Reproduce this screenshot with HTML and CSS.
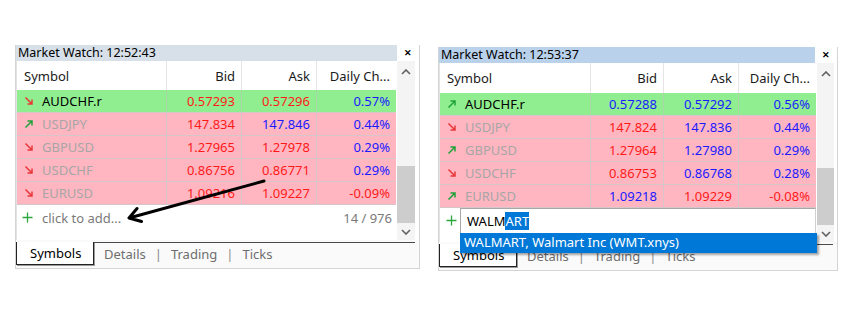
FILE: index.html
```html
<!doctype html>
<html lang="en">
<head>
    <meta charset="utf-8"/>
    <title>Market Watch</title>
    <link rel="stylesheet" href="styles.css">
</head>
<body>

<div class="stage">

    <!-- left window: inactive, "click to add" -->
    <div class="panel panel-a">
        <div class="title">
            <span class="title-text">Market Watch: 12:52:43</span>
            <span class="close">&#x2715;</span>
        </div>
        <div class="main">
            <div class="table">
                <div class="row head">
                    <div class="cell sym">Symbol</div>
                    <div class="cell num">Bid</div>
                    <div class="cell num">Ask</div>
                    <div class="cell num">Daily Ch...</div>
                </div>
                <div class="row green">
                    <div class="cell sym active"><svg class="dir dn" viewBox="0 0 10 10"><path d="M1.5 1.5L8 8M8 3.5V8H3.5"/></svg>AUDCHF.r</div>
                    <div class="cell num red">0.57293</div>
                    <div class="cell num red">0.57296</div>
                    <div class="cell num blue">0.57%</div>
                </div>
                <div class="row pink">
                    <div class="cell sym"><svg class="dir up" viewBox="0 0 10 10"><path d="M1.5 8.5L8 2M3.5 2H8V6.5"/></svg>USDJPY</div>
                    <div class="cell num red">147.834</div>
                    <div class="cell num blue">147.846</div>
                    <div class="cell num blue">0.44%</div>
                </div>
                <div class="row pink">
                    <div class="cell sym"><svg class="dir dn" viewBox="0 0 10 10"><path d="M1.5 1.5L8 8M8 3.5V8H3.5"/></svg>GBPUSD</div>
                    <div class="cell num red">1.27965</div>
                    <div class="cell num red">1.27978</div>
                    <div class="cell num blue">0.29%</div>
                </div>
                <div class="row pink">
                    <div class="cell sym"><svg class="dir dn" viewBox="0 0 10 10"><path d="M1.5 1.5L8 8M8 3.5V8H3.5"/></svg>USDCHF</div>
                    <div class="cell num red">0.86756</div>
                    <div class="cell num red">0.86771</div>
                    <div class="cell num blue">0.29%</div>
                </div>
                <div class="row pink">
                    <div class="cell sym"><svg class="dir dn" viewBox="0 0 10 10"><path d="M1.5 1.5L8 8M8 3.5V8H3.5"/></svg>EURUSD</div>
                    <div class="cell num red">1.09216</div>
                    <div class="cell num red">1.09227</div>
                    <div class="cell num red">-0.09%</div>
                </div>
                <div class="add">
                    <svg class="plus" viewBox="0 0 11 11"><path d="M5.5 0.5V10.5M0.5 5.5H10.5"/></svg>
                    <span class="hint">click to add...</span>
                    <span class="count">14 / 976</span>
                </div>
            </div>
            <div class="scroll">
                <div class="sbtn"><svg viewBox="0 0 10 6"><path d="M1 5L5 1L9 5"/></svg></div>
                <div class="track"><div class="thumb"></div></div>
                <div class="sbtn"><svg viewBox="0 0 10 6"><path d="M1 1L5 5L9 1"/></svg></div>
            </div>
        </div>
        <div class="tabs">
            <div class="tab on">Symbols</div>
            <div class="tab-rest">
                <span class="tab">Details</span><span class="sep">|</span>
                <span class="tab">Trading</span><span class="sep">|</span>
                <span class="tab">Ticks</span>
            </div>
        </div>
    </div>

    <!-- right window: active, typing a symbol -->
    <div class="panel panel-b">
        <div class="title">
            <span class="title-text">Market Watch: 12:53:37</span>
            <span class="close">&#x2715;</span>
        </div>
        <div class="main">
            <div class="table">
                <div class="row head">
                    <div class="cell sym">Symbol</div>
                    <div class="cell num">Bid</div>
                    <div class="cell num">Ask</div>
                    <div class="cell num">Daily Ch...</div>
                </div>
                <div class="row green">
                    <div class="cell sym active"><svg class="dir up" viewBox="0 0 10 10"><path d="M1.5 8.5L8 2M3.5 2H8V6.5"/></svg>AUDCHF.r</div>
                    <div class="cell num blue">0.57288</div>
                    <div class="cell num blue">0.57292</div>
                    <div class="cell num blue">0.56%</div>
                </div>
                <div class="row pink">
                    <div class="cell sym"><svg class="dir dn" viewBox="0 0 10 10"><path d="M1.5 1.5L8 8M8 3.5V8H3.5"/></svg>USDJPY</div>
                    <div class="cell num red">147.824</div>
                    <div class="cell num blue">147.836</div>
                    <div class="cell num blue">0.44%</div>
                </div>
                <div class="row pink">
                    <div class="cell sym"><svg class="dir up" viewBox="0 0 10 10"><path d="M1.5 8.5L8 2M3.5 2H8V6.5"/></svg>GBPUSD</div>
                    <div class="cell num red">1.27964</div>
                    <div class="cell num blue">1.27980</div>
                    <div class="cell num blue">0.29%</div>
                </div>
                <div class="row pink">
                    <div class="cell sym"><svg class="dir dn" viewBox="0 0 10 10"><path d="M1.5 1.5L8 8M8 3.5V8H3.5"/></svg>USDCHF</div>
                    <div class="cell num red">0.86753</div>
                    <div class="cell num blue">0.86768</div>
                    <div class="cell num blue">0.28%</div>
                </div>
                <div class="row pink">
                    <div class="cell sym"><svg class="dir up" viewBox="0 0 10 10"><path d="M1.5 8.5L8 2M3.5 2H8V6.5"/></svg>EURUSD</div>
                    <div class="cell num blue">1.09218</div>
                    <div class="cell num red">1.09229</div>
                    <div class="cell num red">-0.08%</div>
                </div>
                <div class="add editing">
                    <svg class="plus" viewBox="0 0 11 11"><path d="M5.5 0.5V10.5M0.5 5.5H10.5"/></svg>
                    <div class="input">WALM<span class="sel">ART</span>
                        <div class="suggest">WALMART, Walmart Inc (WMT.xnys)</div>
                    </div>
                </div>
            </div>
            <div class="scroll">
                <div class="sbtn"><svg viewBox="0 0 10 6"><path d="M1 5L5 1L9 5"/></svg></div>
                <div class="track"><div class="thumb"></div></div>
                <div class="sbtn"><svg viewBox="0 0 10 6"><path d="M1 1L5 5L9 1"/></svg></div>
            </div>
        </div>
        <div class="tabs">
            <div class="tab on">Symbols</div>
            <div class="tab-rest">
                <span class="tab">Details</span><span class="sep">|</span>
                <span class="tab">Trading</span><span class="sep">|</span>
                <span class="tab">Ticks</span>
            </div>
        </div>
    </div>

    <!-- annotation arrow pointing at "click to add" -->
    <svg class="pointer" viewBox="0 0 851 315" width="851" height="315">
        <path d="M264 181L129 218M137 208.5L129 218L141.5 221.5"/>
    </svg>
</div>

</body>
</html>
```

FILE: styles.css
```css
* {
    padding: 0;
    margin: 0;
    box-sizing: border-box;
}
body {
    background: #fff;
    font-family: "Noto Sans", "Open Sans", sans-serif;
    font-size: 13px;
    color: #000;
}
.stage {
    position: relative;
    width: 851px;
    height: 315px;
    display: flex;
    align-items: flex-start;
    gap: 18px;
    padding: 45px 0 0 15px;
}

/* window */
.panel {
    border: 1px solid #d4d4d4;
    border-top: none;
    background: #fff;
}
.panel-a {
    width: 405px;
}
.panel-b {
    width: 400px;
    margin-top: 2px;
}
.title {
    height: 16px;
    display: flex;
    align-items: center;
    font-size: 12.5px;
    line-height: 16px;
}
.title-text {
    flex: 1;
    height: 16px;
    padding-left: 2px;
    background: #d7e0e9;
    white-space: nowrap;
}
.panel-b .title-text {
    background: #b9d1ea;
}
.close {
    width: 22px;
    text-align: center;
    font-size: 9px;
    font-weight: bold;
}

/* table */
.main {
    display: flex;
    gap: 1px;
    padding-right: 4px;
    height: 179px;
}
.panel-b .main {
    padding-right: 3px;
}
.table {
    display: flex;
    flex-direction: column;
    border-left: 1px solid #e3e3e3;
}
.row {
    display: grid;
    grid-template-columns: 150px 75px 75px 79px;
    height: 23px;
    border-bottom: 1px solid #d6c6ca;
}
.panel-b .row {
    grid-template-columns: 151px 73px 75px 77px;
}
.row.head {
    height: 29px;
    border-bottom: none;
}
.panel-b .row.head {
    height: 30px;
}
.cell {
    display: flex;
    align-items: center;
    padding: 0 6px;
    border-right: 1px solid #d6c6ca;
    white-space: nowrap;
    overflow: hidden;
}
.head .cell {
    border-right-color: #e5e5e5;
    color: #1a1a1a;
}
.cell:last-child {
    border-right: none;
}
.cell.sym {
    padding-left: 7px;
    color: #a6a6a6;
}
.head .cell.sym {
    color: #1a1a1a;
}
.cell.sym.active {
    color: #000;
}
.cell.num {
    justify-content: flex-end;
}
.green {
    background: #90ee90;
}
.green .cell {
    border-right-color: #a8d8a8;
}
.pink {
    background: #ffb6c1;
}
.red {
    color: #ff1a1a;
}
.blue {
    color: #1a1aff;
}
.dir {
    width: 10px;
    height: 10px;
    margin-right: 8px;
    fill: none;
    stroke-width: 1.5;
}
.dir.dn {
    stroke: #e8383a;
}
.dir.up {
    stroke: #1fa23a;
}

/* add row */
.add {
    height: 25px;
    display: flex;
    align-items: center;
    padding: 0 4px 0 5px;
    color: #7a7a7a;
}
.plus {
    width: 11px;
    height: 11px;
    margin-right: 9px;
    fill: none;
    stroke: #2aa83e;
    stroke-width: 1.3;
}
.hint {
    flex: 1;
}
.add.editing {
    padding-right: 0;
    padding-left: 6px;
}
.add.editing .plus {
    margin-right: 3px;
}
.input {
    position: relative;
    flex: 1;
    height: 26px;
    padding-left: 6px;
    border: 1px solid #a8a8a8;
    border-right-color: #d0d0d0;
    line-height: 24px;
    color: #000;
}
.sel {
    background: #0078d7;
    color: #fff;
}
.suggest {
    position: absolute;
    left: -1px;
    top: 24px;
    width: 357px;
    height: 20px;
    padding-left: 4px;
    background: #0078d7;
    color: #fff;
    line-height: 19px;
    box-shadow: 2px 2px 2px rgba(0, 0, 0, 0.35);
}

/* scrollbar */
.scroll {
    width: 18px;
    display: flex;
    flex-direction: column;
    background: #f4f4f4;
}
.sbtn {
    height: 17px;
    display: flex;
    align-items: center;
    justify-content: center;
}
.sbtn:first-child {
    height: 22px;
}
.sbtn svg {
    width: 10px;
    height: 6px;
    fill: none;
    stroke: #606060;
    stroke-width: 1.6;
}
.track {
    flex: 1;
    display: flex;
    flex-direction: column;
    justify-content: flex-end;
}
.thumb {
    height: 57px;
    background: #cdcdcd;
}

/* bottom tabs */
.tabs {
    display: flex;
    height: 28px;
    padding: 2px 4px 0 0;
    background: #fafafa;
}
.tab.on {
    width: 78px;
    height: 23px;
    padding-left: 13px;
    line-height: 22px;
    color: #000;
    background: #fff;
    border: 1px solid #222;
    border-top: none;
    box-shadow: 1px 1px 0 #9a9a9a;
}
.tab-rest {
    flex: 1;
    height: 23px;
    display: flex;
    align-items: center;
    border-top: 1px solid #4a4a4a;
    color: #6e6e6e;
}
.tab-rest .tab:first-child {
    margin-left: 10px;
}
.sep {
    margin: 0 9px;
    color: #8a8a8a;
}

/* annotation */
.pointer {
    position: absolute;
    left: 0;
    top: 0;
    pointer-events: none;
}
.pointer path {
    fill: none;
    stroke: #000;
    stroke-width: 3;
    stroke-linecap: round;
    stroke-linejoin: round;
}
```
